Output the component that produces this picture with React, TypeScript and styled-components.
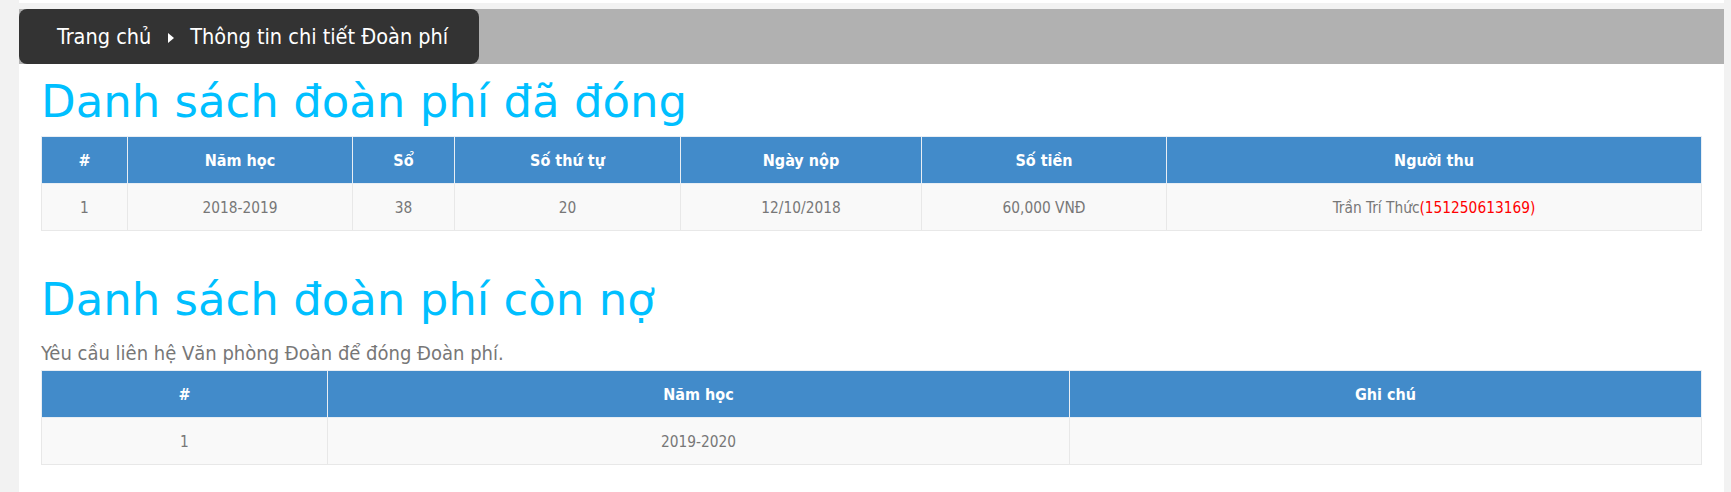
import React from "react";
import styled, { createGlobalStyle } from "styled-components";

const GlobalStyle = createGlobalStyle`
  html, body {
    margin: 0;
    padding: 0;
    background: #f2f2f2;
  }
  body {
    font-family: "DejaVu Sans Condensed", "DejaVu Sans", sans-serif;
  }
`;

const Page = styled.div`
  padding: 0 7px 0 19px;
`;

const TopStrip = styled.div`
  height: 3px;
  background: #fff;
`;

const Panel = styled.div`
  margin-top: 6px;
  background: #fff;
  min-height: 483px;
`;

const CrumbBar = styled.div`
  height: 55px;
  background: #b1b1b1;
`;

const Crumb = styled.div`
  width: 460px;
  height: 55px;
  box-sizing: border-box;
  padding-left: 38px;
  border-radius: 8px;
  background: #333;
  color: #fff;
  display: flex;
  align-items: center;
  white-space: nowrap;
  font-size: 21.5px;
`;

const CrumbArrow = styled.span`
  flex: none;
  width: 0;
  height: 0;
  margin: 2px 16px 0 17px;
  border-left: 6px solid #fff;
  border-top: 5px solid transparent;
  border-bottom: 5px solid transparent;
`;

const Content = styled.div`
  padding: 0 23px 28px 22px;
`;

const Title = styled.h2<{ $top: number; $bottom: number }>`
  margin: ${(p) => p.$top}px 0 ${(p) => p.$bottom}px;
  font-family: "DejaVu Sans", Verdana, sans-serif;
  font-weight: normal;
  font-size: 45px;
  line-height: 50px;
  color: #00bfff;
`;

const Note = styled.p`
  margin: 15px 0 3px;
  font-size: 20px;
  line-height: 27px;
  color: #777;
`;

const Table = styled.table`
  width: 100%;
  border-collapse: collapse;
  table-layout: fixed;
`;

const Col = styled.col<{ $w: number }>`
  width: ${(p) => p.$w}px;
`;

const Th = styled.th`
  height: 46px;
  padding: 0 8px;
  background: #428bca;
  border: 1px solid #e8eef4;
  color: #fff;
  font-family: "DejaVu Sans Condensed", "DejaVu Sans", sans-serif;
  font-weight: bold;
  font-size: 16px;
  text-align: center;
`;

const Td = styled.td`
  height: 45px;
  padding: 1px 8px 0;
  background: #f9f9f9;
  border: 1px solid #e8e8e8;
  color: #777;
  font-size: 15.3px;
  text-align: center;
`;

const Code = styled.span`
  color: #f00;
`;

type Column = { label: string; width: number };

const paidCols: Column[] = [
  { label: "#", width: 86 },
  { label: "Năm học", width: 225 },
  { label: "Sổ", width: 102 },
  { label: "Số thứ tự", width: 226 },
  { label: "Ngày nộp", width: 241 },
  { label: "Số tiền", width: 245 },
  { label: "Người thu", width: 535 },
];

const debtCols: Column[] = [
  { label: "#", width: 286 },
  { label: "Năm học", width: 742 },
  { label: "Ghi chú", width: 632 },
];

const DataTable = ({
  columns,
  children,
}: {
  columns: Column[];
  children: React.ReactNode;
}) => (
  <Table>
    <colgroup>
      {columns.map((c) => (
        <Col key={c.label} $w={c.width} />
      ))}
    </colgroup>
    <thead>
      <tr>
        {columns.map((c) => (
          <Th key={c.label}>{c.label}</Th>
        ))}
      </tr>
    </thead>
    <tbody>{children}</tbody>
  </Table>
);

export default function App() {
  return (
    <Page>
      <GlobalStyle />
      <TopStrip />
      <Panel>
        <CrumbBar>
          <Crumb>
            Trang chủ
            <CrumbArrow />
            Thông tin chi tiết Đoàn phí
          </Crumb>
        </CrumbBar>
        <Content>
          <Title $top={13} $bottom={9}>
            Danh sách đoàn phí đã đóng
          </Title>
          <DataTable columns={paidCols}>
            <tr>
              <Td>1</Td>
              <Td>2018-2019</Td>
              <Td>38</Td>
              <Td>20</Td>
              <Td>12/10/2018</Td>
              <Td>60,000 VNĐ</Td>
              <Td>
                Trần Trí Thức<Code>(151250613169)</Code>
              </Td>
            </tr>
          </DataTable>
          <Title $top={44} $bottom={0}>
            Danh sách đoàn phí còn nợ
          </Title>
          <Note>Yêu cầu liên hệ Văn phòng Đoàn để đóng Đoàn phí.</Note>
          <DataTable columns={debtCols}>
            <tr>
              <Td>1</Td>
              <Td>2019-2020</Td>
              <Td></Td>
            </tr>
          </DataTable>
        </Content>
      </Panel>
    </Page>
  );
}
